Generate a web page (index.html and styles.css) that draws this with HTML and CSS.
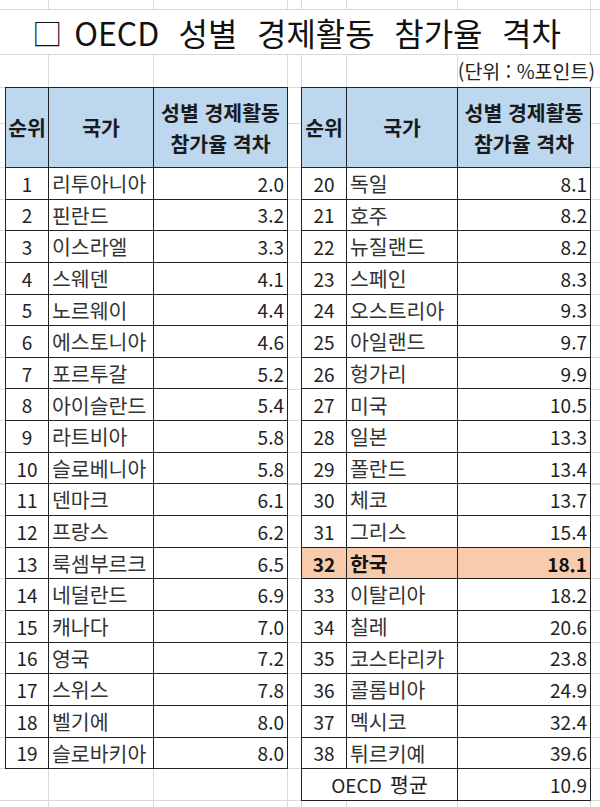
FILE: index.html
```html
<!DOCTYPE html>
<html lang="ko">
<head>
<meta charset="utf-8">
<title>OECD 성별 경제활동 참가율 격차</title>
<link rel="stylesheet" href="styles.css">
</head>
<body>
<div class="sheet">
  <div class="title-row"><h1 class="title"><span class="box">□</span><span class="ttext">OECD 성별 경제활동 참가율 격차</span></h1></div>
  <div class="unit-row"><span class="unit">(단위 : %포인트)</span></div>
  <div class="tables">
    <div class="tbl tbl-left">
      <div class="c h">순위</div><div class="c h">국가</div><div class="c h">성별 경제활동<br>참가율 격차</div>
      <div class="c rank">1</div><div class="c name">리투아니아</div><div class="c val">2.0</div>
      <div class="c rank">2</div><div class="c name">핀란드</div><div class="c val">3.2</div>
      <div class="c rank">3</div><div class="c name">이스라엘</div><div class="c val">3.3</div>
      <div class="c rank">4</div><div class="c name">스웨덴</div><div class="c val">4.1</div>
      <div class="c rank">5</div><div class="c name">노르웨이</div><div class="c val">4.4</div>
      <div class="c rank">6</div><div class="c name">에스토니아</div><div class="c val">4.6</div>
      <div class="c rank">7</div><div class="c name">포르투갈</div><div class="c val">5.2</div>
      <div class="c rank">8</div><div class="c name">아이슬란드</div><div class="c val">5.4</div>
      <div class="c rank">9</div><div class="c name">라트비아</div><div class="c val">5.8</div>
      <div class="c rank">10</div><div class="c name">슬로베니아</div><div class="c val">5.8</div>
      <div class="c rank">11</div><div class="c name">덴마크</div><div class="c val">6.1</div>
      <div class="c rank">12</div><div class="c name">프랑스</div><div class="c val">6.2</div>
      <div class="c rank">13</div><div class="c name">룩셈부르크</div><div class="c val">6.5</div>
      <div class="c rank">14</div><div class="c name">네덜란드</div><div class="c val">6.9</div>
      <div class="c rank">15</div><div class="c name">캐나다</div><div class="c val">7.0</div>
      <div class="c rank">16</div><div class="c name">영국</div><div class="c val">7.2</div>
      <div class="c rank">17</div><div class="c name">스위스</div><div class="c val">7.8</div>
      <div class="c rank">18</div><div class="c name">벨기에</div><div class="c val">8.0</div>
      <div class="c rank">19</div><div class="c name">슬로바키아</div><div class="c val">8.0</div>
    </div>
    <div class="tbl tbl-right">
      <div class="c h">순위</div><div class="c h">국가</div><div class="c h">성별 경제활동<br>참가율 격차</div>
      <div class="c rank">20</div><div class="c name">독일</div><div class="c val">8.1</div>
      <div class="c rank">21</div><div class="c name">호주</div><div class="c val">8.2</div>
      <div class="c rank">22</div><div class="c name">뉴질랜드</div><div class="c val">8.2</div>
      <div class="c rank">23</div><div class="c name">스페인</div><div class="c val">8.3</div>
      <div class="c rank">24</div><div class="c name">오스트리아</div><div class="c val">9.3</div>
      <div class="c rank">25</div><div class="c name">아일랜드</div><div class="c val">9.7</div>
      <div class="c rank">26</div><div class="c name">헝가리</div><div class="c val">9.9</div>
      <div class="c rank">27</div><div class="c name">미국</div><div class="c val">10.5</div>
      <div class="c rank">28</div><div class="c name">일본</div><div class="c val">13.3</div>
      <div class="c rank">29</div><div class="c name">폴란드</div><div class="c val">13.4</div>
      <div class="c rank">30</div><div class="c name">체코</div><div class="c val">13.7</div>
      <div class="c rank">31</div><div class="c name">그리스</div><div class="c val">15.4</div>
      <div class="c rank hl">32</div><div class="c name hl">한국</div><div class="c val hl">18.1</div>
      <div class="c rank">33</div><div class="c name">이탈리아</div><div class="c val">18.2</div>
      <div class="c rank">34</div><div class="c name">칠레</div><div class="c val">20.6</div>
      <div class="c rank">35</div><div class="c name">코스타리카</div><div class="c val">23.8</div>
      <div class="c rank">36</div><div class="c name">콜롬비아</div><div class="c val">24.9</div>
      <div class="c rank">37</div><div class="c name">멕시코</div><div class="c val">32.4</div>
      <div class="c rank">38</div><div class="c name">튀르키예</div><div class="c val">39.6</div>
      <div class="c avg"><span>OECD <span class="avg-k">평균</span></span></div><div class="c val">10.9</div>
    </div>
  </div>
</div>
</body>
</html>
```

FILE: styles.css
```css
* { box-sizing: border-box; margin: 0; padding: 0; }

body {
  margin: 0;
  background: #fff;
  font-family: "Noto Sans CJK KR", "Noto Sans", sans-serif;
  color: #222;
}

.sheet {
  --g: #dadada;
  width: 600px;
  height: 807px;
  overflow: hidden;
  padding-top: 10px;
  background-color: #fff;
  background-image:
    linear-gradient(to right,
      transparent 48px, var(--g) 48px 49px,
      transparent 49px 153px, var(--g) 153px 154px,
      transparent 154px 287px, var(--g) 287px 288px,
      transparent 288px 301px, var(--g) 301px 302px,
      transparent 302px 346px, var(--g) 346px 347px,
      transparent 347px 457px, var(--g) 457px 458px,
      transparent 458px 590px, var(--g) 590px 591px,
      transparent 591px),
    linear-gradient(to bottom,
      transparent 9px, var(--g) 9px 10px,
      transparent 10px 54px, var(--g) 54px 55px,
      transparent 55px 87px, var(--g) 87px 88px,
      transparent 88px 123px, var(--g) 123px 124px,
      transparent 124px),
    repeating-linear-gradient(to bottom, var(--g) 0 1px, transparent 1px 31.65px);
  background-size: 100% 100%, 100% 167px, 100% 640px;
  background-position: 0 0, 0 0, 0 167px;
  background-repeat: no-repeat;
}

.title-row {
  margin-left: 5px;
  width: 585px;
  height: 44px;
  background: #fff;
  display: flex;
  align-items: center;
  justify-content: center;
}

.title {
  display: flex;
  align-items: center;
  font-size: 32px;
  font-weight: 400;
  line-height: 44px;
  color: #111;
  white-space: nowrap;
  margin-right: 2px;
}

.box {
  font-size: 30px;
  margin-right: 12px;
}

.ttext {
  word-spacing: 10.5px;
}

.unit-row {
  margin-top: 1px;
  height: 32px;
  display: flex;
  align-items: center;
  justify-content: flex-end;
  padding-right: 5px;
  background: linear-gradient(to right, transparent 590px, #fff 590px);
}

.unit {
  font-size: 19.5px;
  line-height: 1;
  color: #222;
  white-space: nowrap;
}

.tables {
  display: flex;
  align-items: flex-start;
  gap: 13px;
  padding-left: 5px;
}

.tbl {
  display: grid;
  border-left: 1px solid #222;
  border-top: 1px solid #222;
  background: #fff;
}

.tbl-left {
  grid-template-columns: 43px 105px 134px;
  grid-template-rows: 80px repeat(19, 31.65px);
}

.tbl-right {
  grid-template-columns: 45px 111px 133px;
  grid-template-rows: 80px repeat(20, 31.65px);
}

.c {
  border-right: 1px solid #222;
  border-bottom: 1px solid #222;
  display: flex;
  align-items: center;
  font-size: 19px;
  line-height: 1;
  white-space: nowrap;
  overflow: visible;
}

.h {
  background: #bdd7ee;
  font-weight: 700;
  font-size: 20.5px;
  justify-content: center;
  text-align: center;
  line-height: 31px;
  color: #1a1a1a;
}

.rank { justify-content: center; }
.name { padding-left: 3px; font-size: 20.5px; color: #333; }
.val { justify-content: flex-end; padding-right: 3px; }
.avg { grid-column: span 2; justify-content: center; word-spacing: 3px; }
.avg-k { font-size: 20.5px; }

.hl {
  background: #f8cbad;
  font-weight: 700;
  color: #111;
}
```
